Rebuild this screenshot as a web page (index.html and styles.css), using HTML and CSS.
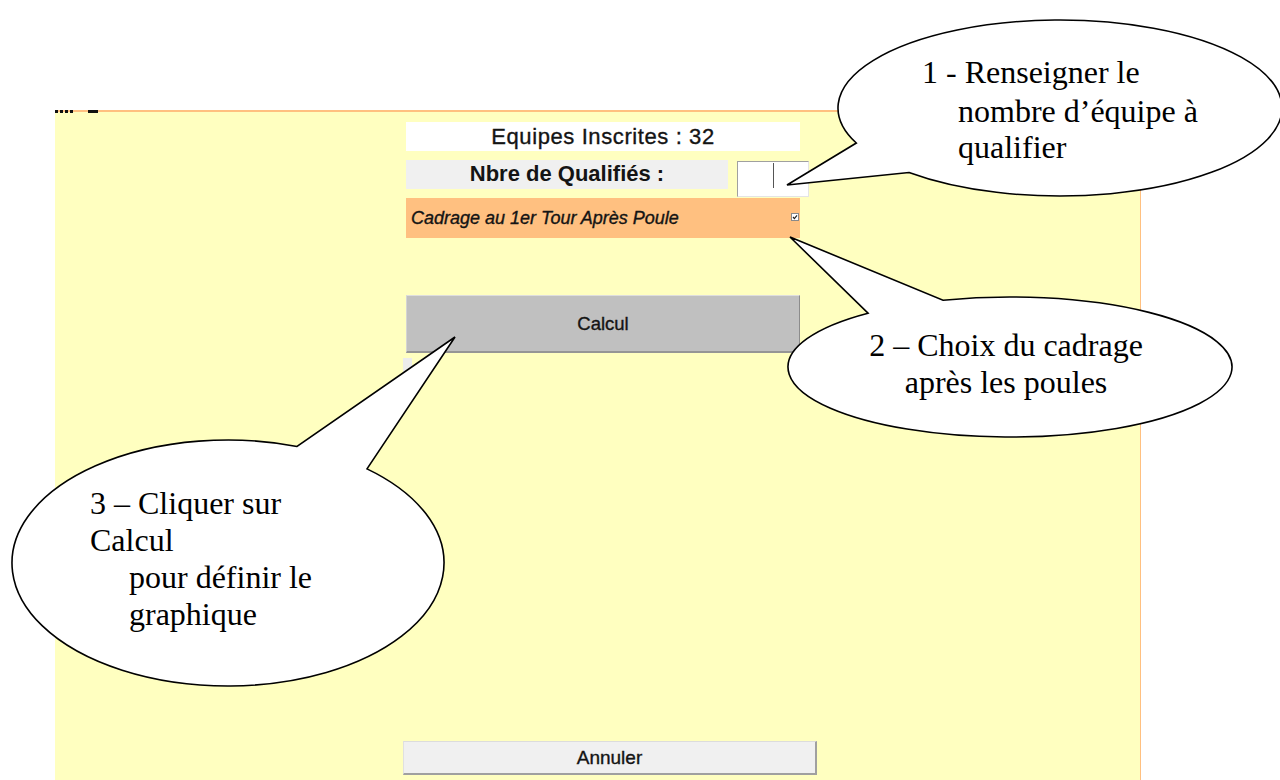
FILE: index.html
```html
<!DOCTYPE html>
<html lang="fr">
<head>
    <meta charset="utf-8">
    <title>Qualifiés - Cadrage</title>
    <link rel="stylesheet" href="styles.css">
</head>
<body>
<div class="page">

    <div class="panel">
        <div class="cut-title"></div>

        <div class="form">
            <div class="count">Equipes Inscrites : 32</div>

            <div class="qual-row">
                <div class="qual-label">Nbre de Qualifiés :</div>
                <div class="qual-input"><span class="caret"></span></div>
            </div>

            <div class="cadrage">
                <span class="cadrage-text">Cadrage au 1er Tour Après Poule</span>
                <svg class="check" width="8" height="8" viewBox="0 0 8 8">
                    <rect x="0.5" y="0.5" width="7" height="7" fill="#ffffff" stroke="#8a8a8a" stroke-width="1"/>
                    <path d="M2 4 L3.4 5.6 L6 2.4" fill="none" stroke="#202020" stroke-width="1.2"/>
                </svg>
            </div>

            <div class="btn-calcul">Calcul</div>
            <div class="stub"></div>

            <div class="btn-annuler">Annuler</div>
        </div>
    </div>

    <!-- bulles d'aide -->
    <svg class="bubbles" width="1280" height="780" viewBox="0 0 1280 780">
        <path d="M 909 172.51 A 222 88 0 1 0 856.31 143 L 787 185 Z" />
        <path d="M 943 300.26 A 222 70 0 1 1 868 313.19 L 790 237 Z" />
        <path d="M 297 446.44 A 216 123 0 1 0 367 468.85 L 455 337 Z" />
    </svg>

    <div class="tip tip-one">
        <div>1 - Renseigner le</div>
        <div class="indent second">nombre d’équipe à</div>
        <div class="indent">qualifier</div>
    </div>

    <div class="tip tip-two">
        <div>2 – Choix du cadrage</div>
        <div>après les poules</div>
    </div>

    <div class="tip tip-three">
        <div>3 – Cliquer sur</div>
        <div>Calcul</div>
        <div class="indent">pour définir le</div>
        <div class="indent">graphique</div>
    </div>

</div>
</body>
</html>
```

FILE: styles.css
```css
body {
    margin: 0;
    background: #ffffff;
}

.page {
    position: relative;
    width: 1280px;
    height: 780px;
    overflow: hidden;
    padding-top: 110px;
    box-sizing: border-box;
}

.panel {
    position: relative;
    box-sizing: border-box;
    margin-left: 55px;
    width: 1086px;
    height: 670px;
    background: #ffffc0;
    border-top: 2px solid #ffc080;
    border-right: 1px solid #ffc080;
}

/* bout de titre coupé au dessus du cadre */
.cut-title {
    position: absolute;
    left: 0;
    top: -2px;
    width: 43px;
    height: 3px;
    background:
        linear-gradient(90deg, transparent 0 33px, #111 33px 43px),
        repeating-linear-gradient(90deg, #111 0 3px, transparent 3px 5px) 0 0 / 20px 3px no-repeat;
}

.form {
    display: flex;
    flex-direction: column;
    margin-left: 351px;
    width: 394px;
    height: 668px;
    padding-top: 10px;
    box-sizing: border-box;
    font-family: "Liberation Sans", Arial, sans-serif;
    color: #141414;
    -webkit-text-stroke: 0.35px #141414;
}

.count {
    height: 29px;
    background: #ffffff;
    font-size: 22px;
    letter-spacing: 0.6px;
    line-height: 29px;
    text-align: center;
}

.qual-row {
    display: flex;
    margin-top: 9px;
    height: 38px;
}

.qual-label {
    flex-shrink: 0;
    width: 322px;
    height: 29px;
    background: #f0f0f0;
    font-size: 22px;
    font-weight: bold;
    line-height: 28px;
    text-align: center;
    -webkit-text-stroke: 0;
}

.qual-input {
    flex-shrink: 0;
    position: relative;
    box-sizing: border-box;
    margin-left: 9px;
    margin-top: 1px;
    width: 72px;
    height: 36px;
    background: #ffffff;
    border-top: 1px solid #a0a0a0;
    border-left: 1px solid #a0a0a0;
    border-right: 1px solid #e4e4e4;
    border-bottom: 1px solid #e4e4e4;
}

.caret {
    position: absolute;
    left: 35px;
    top: 1px;
    width: 1px;
    height: 25px;
    background: #555555;
}

.cadrage {
    display: flex;
    align-items: center;
    justify-content: space-between;
    height: 40px;
    padding: 0 1px 0 5px;
    background: #ffc080;
}

.cadrage-text {
    font-size: 18px;
    font-style: italic;
}

.check {
    display: block;
    margin-top: -3px;
}

.btn-calcul {
    box-sizing: border-box;
    margin-top: 57px;
    height: 58px;
    background: #c0c0c0;
    border-top: 1px solid #dedede;
    border-left: 1px solid #d4d4d4;
    border-right: 1px solid #8c8c8c;
    border-bottom: 2px solid #959595;
    font-size: 18.5px;
    line-height: 56px;
    text-align: center;
}

.stub {
    margin-top: 5px;
    margin-left: -3px;
    width: 9px;
    height: 22px;
    background: #ececec;
}

.btn-annuler {
    box-sizing: border-box;
    margin-top: auto;
    margin-bottom: 5px;
    margin-left: -3px;
    width: 414px;
    height: 34px;
    background: #f0f0f0;
    border-top: 1px solid #dcdcdc;
    border-left: 1px solid #e0e0e0;
    border-right: 2px solid #a0a0a0;
    border-bottom: 2px solid #a0a0a0;
    font-size: 19px;
    line-height: 31px;
    text-align: center;
}

.bubbles {
    position: absolute;
    left: 0;
    top: 0;
}

.bubbles path {
    fill: #ffffff;
    stroke: #000000;
    stroke-width: 1.6;
    stroke-linejoin: miter;
}

.tip {
    position: absolute;
    font-family: "Liberation Serif", "Times New Roman", serif;
    font-size: 32px;
    line-height: 37px;
    color: #000000;
    white-space: nowrap;
}

.tip .indent {
    padding-left: 37px;
}

.tip-one {
    left: 922px;
    top: 54px;
    line-height: 36px;
}

.tip-one .indent {
    padding-left: 36px;
}

.tip-one .second {
    margin-top: 3px;
}

.tip-two {
    left: 806px;
    top: 327px;
    width: 400px;
    text-align: center;
}

.tip-three {
    left: 90px;
    top: 485px;
}

.tip-three .indent {
    padding-left: 39px;
}
```
